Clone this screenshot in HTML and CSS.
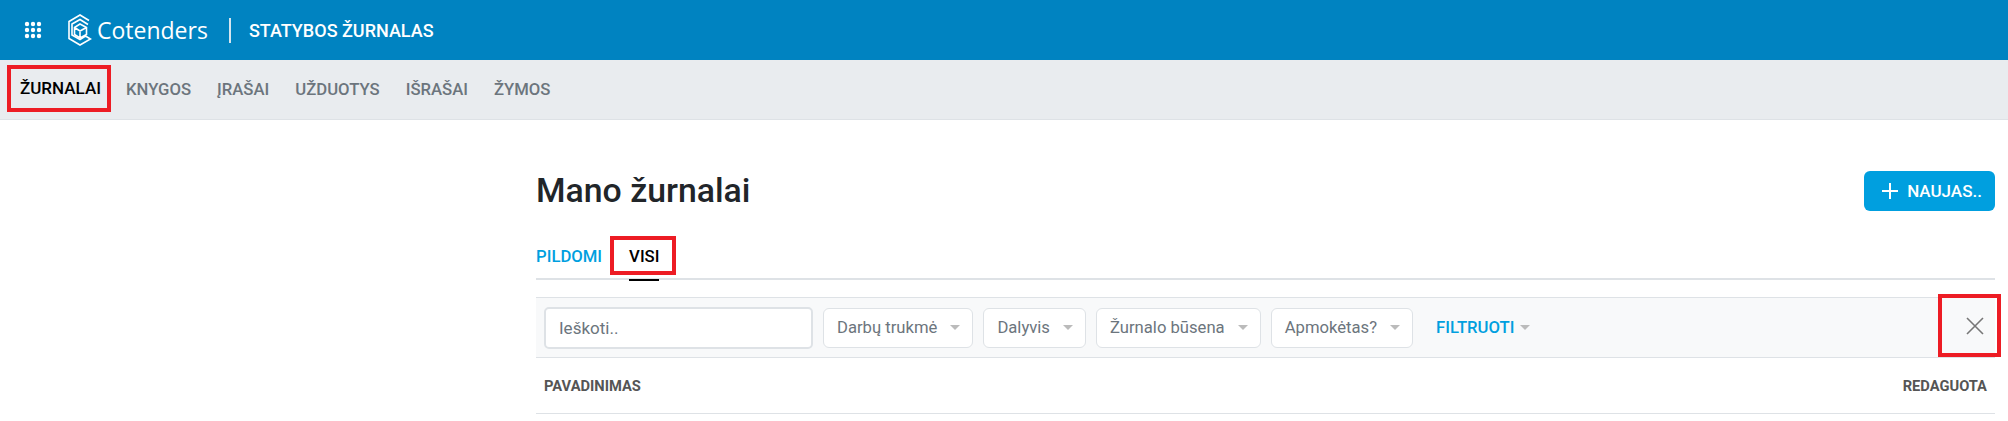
FILE: index.html
```html
<!DOCTYPE html>
<html lang="lt">
<head>
  <meta charset="UTF-8">
  <title>Mano žurnalai</title>
  <link rel="stylesheet" href="styles.css">
</head>
<body>
  <header class="topbar">
    <svg class="apps-icon" width="18" height="18" viewBox="0 0 18 18" fill="#fff">
      <circle cx="3" cy="3" r="2.2"/><circle cx="9" cy="3" r="2.2"/><circle cx="15" cy="3" r="2.2"/>
      <circle cx="3" cy="9" r="2.2"/><circle cx="9" cy="9" r="2.2"/><circle cx="15" cy="9" r="2.2"/>
      <circle cx="3" cy="15" r="2.2"/><circle cx="9" cy="15" r="2.2"/><circle cx="15" cy="15" r="2.2"/>
    </svg>
    <svg class="logo-icon" width="24" height="32" viewBox="0 0 24 32" fill="none" stroke="#fff" stroke-width="1.6">
      <path d="M21 6.500 12 1 1 7.500V24.500L12 31 22.500 25 17.500 22 12 25.500 4 21V10L12 5.500 20 10.500"/>
      <path d="M12 10 18.500 13.500V20.500L12 24 6.500 20.500V13.500ZM6.500 13.500 12 17 18.500 13.500M12 17V24"/>
    </svg>
    <span class="brand">Cotenders</span>
    <span class="divider"></span>
    <span class="app-name">STATYBOS ŽURNALAS</span>
  </header>

  <nav class="subnav">
    <a class="subnav-item active marked">ŽURNALAI</a>
    <a class="subnav-item">KNYGOS</a>
    <a class="subnav-item">ĮRAŠAI</a>
    <a class="subnav-item">UŽDUOTYS</a>
    <a class="subnav-item">IŠRAŠAI</a>
    <a class="subnav-item">ŽYMOS</a>
  </nav>

  <main class="content">
    <div class="title-row">
      <h1>Mano žurnalai</h1>
      <button class="new-button">
        <svg width="16" height="16" viewBox="0 0 16 16" stroke="#fff" stroke-width="2"><path d="M8 0V16M0 8H16"/></svg>
        NAUJAS..
      </button>
    </div>

    <div class="tabs">
      <a class="tab">PILDOMI</a>
      <a class="tab tab-active">VISI</a>
    </div>

    <div class="filters">
      <input class="search" type="text" placeholder="Ieškoti..">
      <div class="select">Darbų trukmė<span class="caret"></span></div>
      <div class="select">Dalyvis<span class="caret"></span></div>
      <div class="select">Žurnalo būsena<span class="caret"></span></div>
      <div class="select">Apmokėtas?<span class="caret"></span></div>
      <a class="filter-link">FILTRUOTI<span class="caret"></span></a>
      <div class="close-box">
        <svg width="18" height="18" viewBox="0 0 18 18" stroke="#777" stroke-width="1.6"><path d="M1 1 17 17M17 1 1 17"/></svg>
      </div>
    </div>

    <div class="table-head">
      <span>PAVADINIMAS</span>
      <span>REDAGUOTA</span>
    </div>
  </main>
</body>
</html>
```

FILE: styles.css
```css
* {
  box-sizing: border-box;
}

body {
  margin: 0;
  background-color: #fff;
  font-family: Roboto, "Liberation Sans", sans-serif;
  color: #212529;
}

.topbar {
  height: 60px;
  background-color: #0083c1;
  color: #fff;
  display: flex;
  align-items: center;
  padding-left: 24px;
}

.apps-icon {
  margin-right: 26px;
}

.logo-icon {
  margin-right: 5px;
}

.brand {
  font-family: "Open Sans", sans-serif;
  font-size: 23px;
  font-weight: 400;
  margin-right: 21px;
}

.divider {
  width: 2px;
  height: 25px;
  background-color: #d5e5ef;
  margin-right: 18px;
}

.app-name {
  font-size: 18px;
  font-weight: 500;
}

.subnav {
  height: 60px;
  background-color: #e9ecef;
  border-bottom: 1px solid #dee2e6;
  display: flex;
  align-items: center;
  padding-left: 11px;
}

.subnav-item {
  font-size: 16.700px;
  font-weight: 500;
  color: #6c757d;
  padding: 0 13px;
  line-height: 39px;
}

.subnav-item.active {
  color: #000;
}

.marked {
  outline: 4px solid #ed1c24;
  padding: 0 6px 0 9px;
  margin-right: 6px;
  margin-bottom: 2px;
  font-size: 17px;
}

.content {
  margin-left: 536px;
  width: 1459px;
}

.title-row {
  display: flex;
  justify-content: space-between;
  align-items: center;
  padding-top: 51px;
  height: 91px;
}

h1 {
  margin: 0;
  font-size: 33.800px;
  font-weight: 500;
  line-height: 40px;
}

.new-button {
  width: 131px;
  height: 40px;
  background-color: #009fdf;
  color: #fff;
  border: none;
  border-radius: 6px;
  padding: 0 0 0 5px;
  font-family: inherit;
  font-size: 17px;
  font-weight: 500;
  display: flex;
  align-items: center;
  justify-content: center;
  gap: 9px;
}

.tabs {
  display: flex;
  align-items: flex-end;
  height: 69px;
  border-bottom: 2px solid #dee2e6;
}

.tab {
  font-size: 16.700px;
  font-weight: 500;
  color: #009fdf;
  line-height: 38px;
  height: 40px;
}

.tab-active {
  color: #000;
  margin-left: 27px;
  position: relative;
}

.tab-active::before {
  content: "";
  position: absolute;
  left: -19px;
  right: -17px;
  top: -2px;
  bottom: 3px;
  border: 4px solid #ed1c24;
}

.tab-active::after {
  content: "";
  position: absolute;
  left: 0;
  right: 0;
  bottom: -3px;
  height: 2px;
  background-color: #000;
}

.filters {
  margin-top: 17px;
  height: 61px;
  background-color: #f8f9fa;
  border-top: 1px solid #dee2e6;
  border-bottom: 1px solid #dee2e6;
  display: flex;
  align-items: center;
  padding-left: 8px;
  gap: 10px;
  position: relative;
}

.search {
  width: 269px;
  height: 42px;
  border: 2px solid #dee2e6;
  border-radius: 5px;
  font-family: inherit;
  font-size: 17px;
  padding: 0 13px;
}

.search::placeholder {
  color: #6c757d;
}

.select {
  height: 40px;
  background-color: #fff;
  border: 1px solid #dee2e6;
  border-radius: 6px;
  font-size: 16.650px;
  color: #6c757d;
  display: flex;
  align-items: center;
  padding: 0 12px 0 13px;
}

.caret {
  width: 0;
  height: 0;
  border-left: 5px solid transparent;
  border-right: 5px solid transparent;
  border-top: 5px solid #bbb;
  margin-left: 13px;
}

.filter-link {
  font-size: 16.700px;
  font-weight: 500;
  color: #009fdf;
  margin-left: 13px;
}

.filter-link .caret {
  display: inline-block;
  margin-left: 5px;
  vertical-align: 3px;
}

/* red marker sticks out past the row on the right */
.close-box {
  position: absolute;
  right: -6px;
  top: -4px;
  width: 63px;
  height: 63px;
  border: 4px solid #ed1c24;
  display: flex;
  align-items: center;
  justify-content: center;
  padding-left: 10px;
}

.table-head {
  height: 56px;
  border-bottom: 1px solid #dee2e6;
  display: flex;
  justify-content: space-between;
  align-items: center;
  padding: 0 8px;
  font-size: 14.700px;
  font-weight: 700;
  color: #555;
}
```
